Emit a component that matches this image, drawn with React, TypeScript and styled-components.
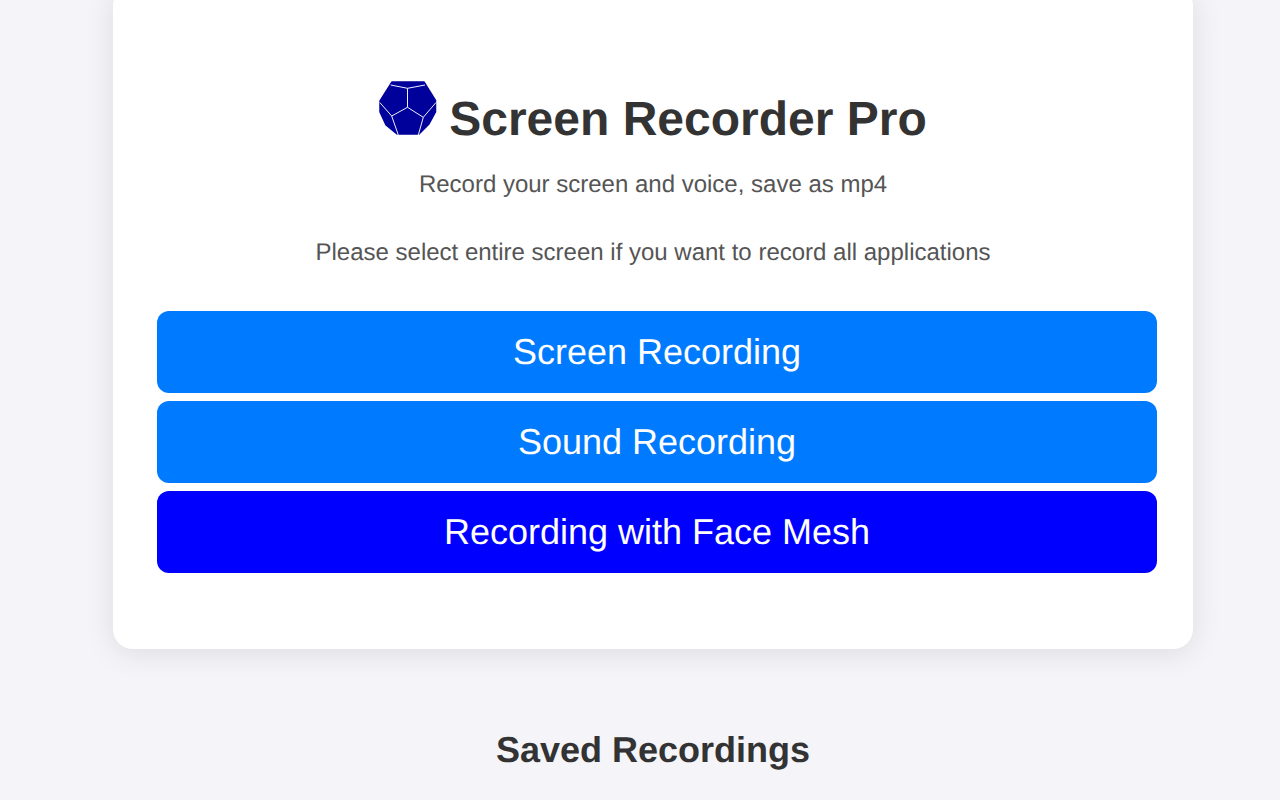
import React from "react";
import styled, { createGlobalStyle } from "styled-components";

const Global = createGlobalStyle`
  html, body { margin: 0; padding: 0; height: 800px; overflow: hidden; background: #f4f4f9; }
  body { font-family: "Liberation Sans", Arial, sans-serif; color: #333; text-rendering: geometricPrecision; }
`;

const Page = styled.main`
  width: 1080px;
  margin: -14px 0 0 113px;
  display: flex;
  flex-direction: column;
  align-items: center;
`;

const Card = styled.section`
  box-sizing: border-box;
  width: 1080px;
  height: 663px;
  padding: 106px 36px 0 44px;
  background: #fff;
  border-radius: 20px;
  box-shadow: 0 4px 30px rgba(0, 0, 0, 0.1);
  display: flex;
  flex-direction: column;
  align-items: center;
`;

const Title = styled.h1`
  margin: 0 8px 0 0;
  font-size: 48px;
  line-height: 55px;
  font-weight: 700;
  color: #333;
  display: flex;
  align-items: flex-start;
  gap: 12px;
`;

const LogoSvg = styled.svg`
  width: 58px;
  height: 55px;
  margin-top: -11px;
  flex: none;
`;

const Note = styled.p`
  margin: 0 8px 0 0;
  font-size: 24px;
  line-height: 28px;
  color: #555;
`;

const Subtitle = styled(Note)`
  margin-top: 24px;
`;

const Hint = styled(Note)`
  margin-top: 40px;
`;

const Buttons = styled.div`
  width: 1000px;
  margin-top: 44px;
  display: flex;
  flex-direction: column;
  gap: 8px;
`;

const Action = styled.button<{ $tone: string }>`
  height: 82px;
  border: 0;
  border-radius: 12px;
  background: ${(p) => p.$tone};
  color: #fff;
  font: 400 36px "Liberation Sans", Arial, sans-serif;
  text-rendering: geometricPrecision;
`;

const SavedHeading = styled.h2`
  margin: 80px 0 0;
  font-size: 36px;
  line-height: 41px;
  font-weight: 700;
  color: #333;
`;

const Logo = () => (
  <LogoSvg viewBox="0 0 58 55" aria-hidden="true">
    <path
      d="M13 1H45L56.5 19.5V31L50 43L40 53H18L7 44L1 31V20Z"
      fill="#00009b"
      stroke="#00009b"
      strokeWidth="1.5"
      strokeLinejoin="round"
    />
    <g fill="none" stroke="#f0f0ff" strokeWidth="1">
      <path d="M11.7 4L28.5 7.3L46 4" />
      <path d="M28.5 7.3V26.3" />
      <path d="M0.8 21.5L12.7 35L28.5 26.3L44.3 36.3L57 21.5" />
      <path d="M12.7 35L19.3 54M44.3 36.3L39.3 54" />
    </g>
  </LogoSvg>
);

export default function App() {
  return (
    <>
      <Global />
      <Page>
        <Card>
          <Title>
            <Logo />
            Screen Recorder Pro
          </Title>
          <Subtitle>Record your screen and voice, save as mp4</Subtitle>
          <Hint>Please select entire screen if you want to record all applications</Hint>
          <Buttons>
            <Action $tone="#007bff">Screen Recording</Action>
            <Action $tone="#007bff">Sound Recording</Action>
            <Action $tone="#0000ff">Recording with Face Mesh</Action>
          </Buttons>
        </Card>
        <SavedHeading>Saved Recordings</SavedHeading>
      </Page>
    </>
  );
}
